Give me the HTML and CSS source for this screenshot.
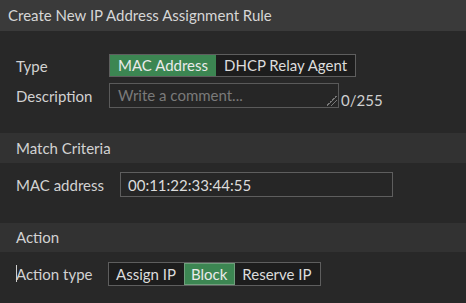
FILE: index.html
```html
<!DOCTYPE html>
<html lang="en">
<head>
  <meta charset="UTF-8">
  <link rel="stylesheet" href="styles.css">
  <title>Create New IP Address Assignment Rule</title>
</head>
<body>
  <div class="title">Create New IP Address Assignment Rule</div>

  <div class="section first">
    <div class="row">
      <span class="label">Type</span>
      <div class="toggle">
        <span class="opt active">MAC Address</span>
        <span class="opt">DHCP Relay Agent</span>
      </div>
    </div>
    <div class="row bottom">
      <span class="label desc">Description</span>
      <div class="area">Write a comment...<span class="grip"></span></div>
      <span class="count">0/255</span>
    </div>
  </div>

  <div class="head">Match Criteria</div>
  <div class="section match">
    <div class="row">
      <span class="label wide">MAC address</span>
      <div class="input">00:11:22:33:44:55</div>
    </div>
  </div>

  <div class="head action">Action</div>
  <div class="section last">
    <div class="row">
      <span class="label"><i class="caret"></i>Action type</span>
      <div class="toggle small">
        <span class="opt">Assign IP</span>
        <span class="opt active">Block</span>
        <span class="opt">Reserve IP</span>
      </div>
    </div>
  </div>
</body>
</html>
```

FILE: styles.css
```css
body{
  margin:0; background:#282828; color:#d2d2d2;
  font-family:Lato, "Open Sans", sans-serif; font-size:15px;
}

.title{
  height:31px; line-height:31px; padding-left:8px;
  background:#3a3a3a; color:#d6d6d6;
}

.section{ display:flex; flex-direction:column; gap:6px; }
.section.first{ padding:23px 0 25px; }
.section.match{ padding:9px 0 26px; }
.section.last{ padding:10px 0 0; }

.row{ display:flex; align-items:center; }
.row.bottom{ align-items:flex-end; }

.label{ width:109px; padding-left:16px; box-sizing:border-box; flex:none; position:relative; }
.label.desc{ align-self:center; }
.label.wide{ width:120px; }

.toggle{ display:flex; border:1px solid #5e5e5e; background:#1d1d1d; }
.opt{ height:21px; line-height:21px; padding:0 8px; color:#dcdcdc; }
.opt.active{ background:#3c8652; color:#eaeaea; }
.toggle.small{ margin-left:-1px; }
.toggle.small .opt{ height:22px; line-height:22px; padding:0 8px 0 7px; }
.toggle.small .opt.active{ outline:1px solid #6f9f7c; outline-offset:-1px; }

.area{
  width:212px; height:23px; line-height:22px; padding:0 8px;
  border:1px solid #5a5a5a; background:#262626; color:#7a7a7a;
  position:relative;
}
.grip{
  position:absolute; right:1px; bottom:1px; width:10px; height:10px;
  background:linear-gradient(135deg, transparent 45%, #777 45%, #777 52%, transparent 52%, transparent 68%, #777 68%, #777 75%, transparent 75%);
}
.count{ margin-left:2px; line-height:16px; color:#d0d0d0; }

.head{ height:30px; line-height:30px; padding-left:16px; background:#323232; }
.head.action{ height:29px; line-height:29px; }

.input{
  width:257px; height:23px; line-height:24px; padding:0 7px;
  border:1px solid #5e5e5e; background:#262626; color:#dcdcdc;
}

.caret{
  position:absolute; left:16px; top:0; width:1px; height:17px; background:#cfcfcf;
}
```
